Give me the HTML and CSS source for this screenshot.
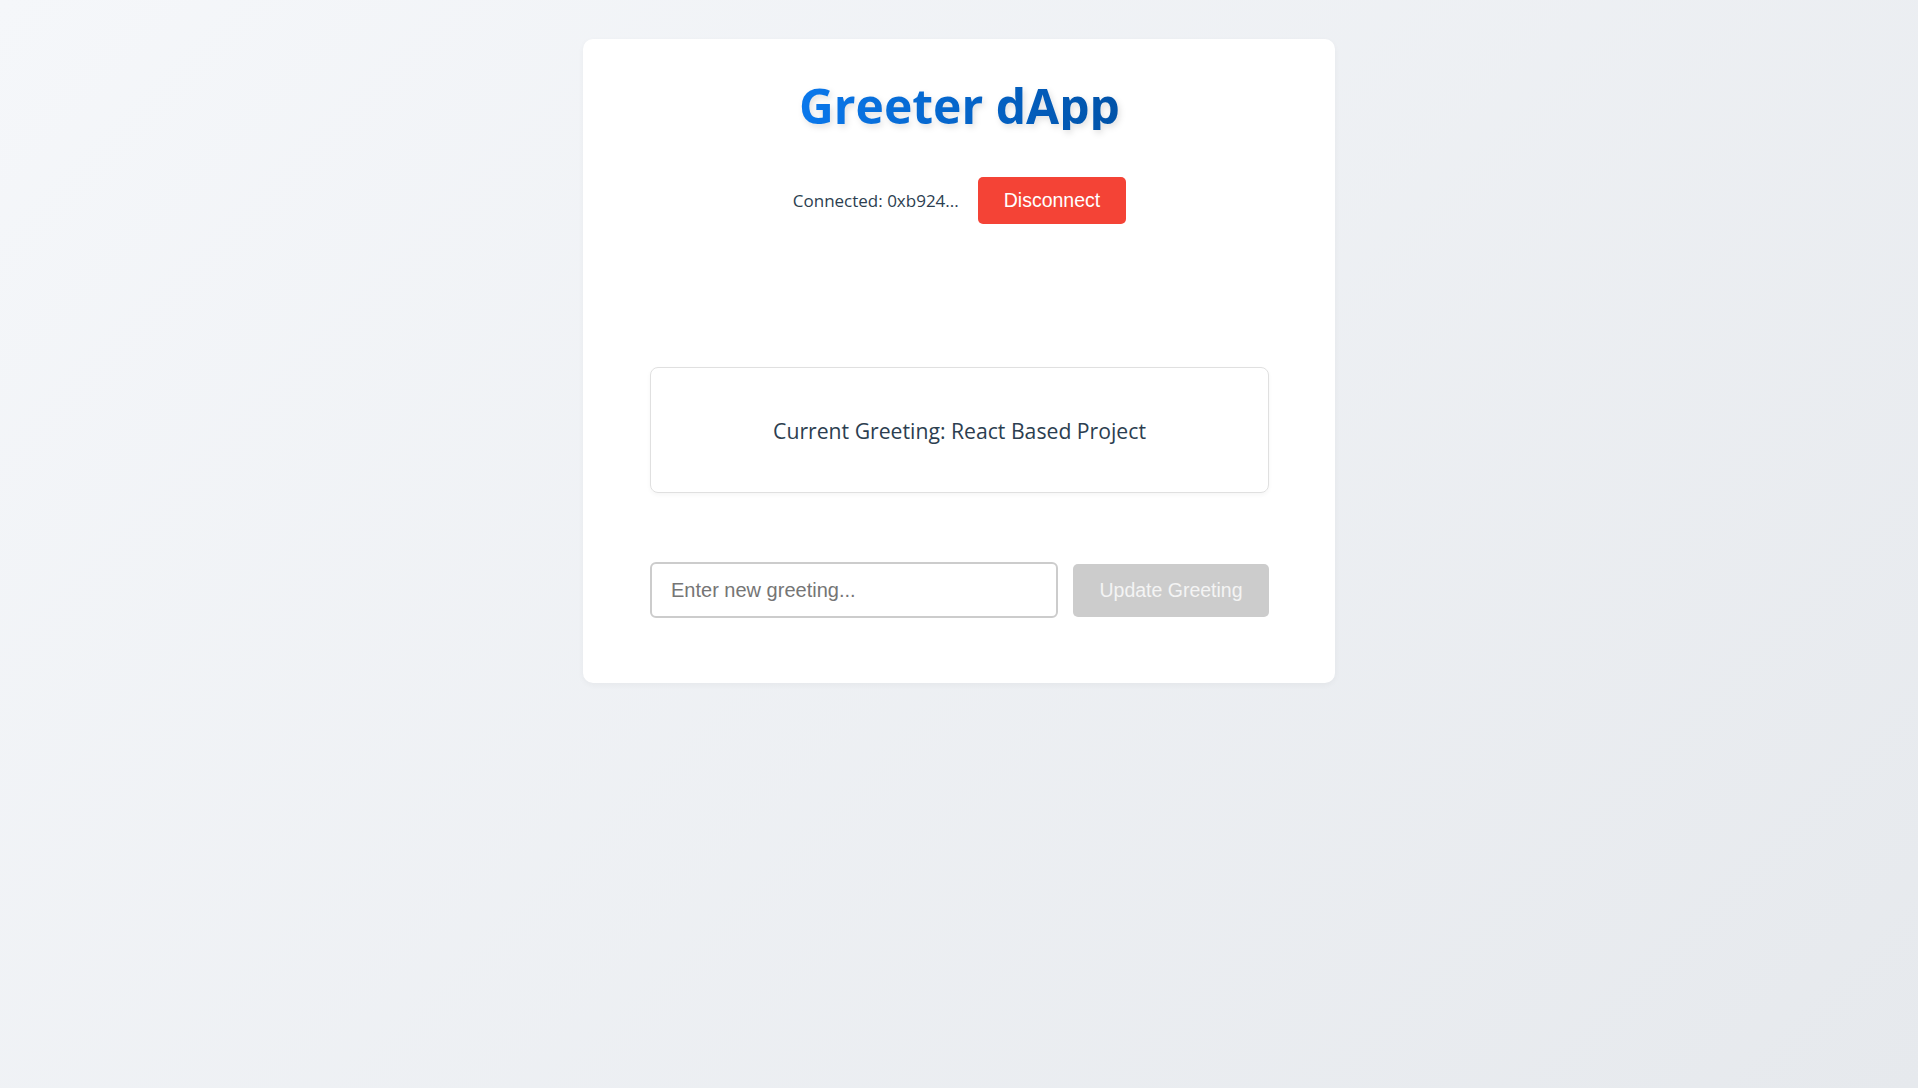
FILE: index.html
```html
<!DOCTYPE html>
<html lang="en">
<head>
<meta charset="utf-8">
<title>Greeter dApp</title>
<link rel="stylesheet" href="styles.css">
</head>
<body>
<div class="app">
  <main class="card">
    <h1 class="title">Greeter dApp</h1>
    <div class="wallet">
      <span class="address">Connected: 0xb924...</span>
      <button class="btn btn-disconnect">Disconnect</button>
    </div>
    <section class="greeting-box">
      <p class="greeting-text">Current Greeting: React Based Project</p>
    </section>
    <form class="update-row">
      <input class="greeting-input" type="text" placeholder="Enter new greeting...">
      <button class="btn btn-update" type="button" disabled>Update Greeting</button>
    </form>
  </main>
</div>
</body>
</html>
```

FILE: styles.css
```css
* { box-sizing: border-box; }

html, body {
  margin: 0;
  padding: 0;
}

body {
  min-height: 100vh;
  background: linear-gradient(135deg, #f5f7fa 0%, #e6e9ed 100%);
  font-family: "Open Sans", "Noto Sans", sans-serif;
  color: #2c3e50;
}

.app {
  padding-top: 39px;
}

.card {
  width: 752px;
  margin: 0 auto;
  background: #ffffff;
  border-radius: 10px;
  padding: 43px 66px 65px 67px;
  box-shadow: 0 2px 6px rgba(0, 0, 0, 0.04);
}

.title {
  margin: 0 auto;
  text-align: center;
  font-size: 48px;
  line-height: 48px;
  font-weight: 700;
  background: linear-gradient(90deg, #0a78ec 0%, #0052a8 100%);
  -webkit-background-clip: text;
  background-clip: text;
  -webkit-text-fill-color: transparent;
  color: transparent;
  width: fit-content;
  filter: drop-shadow(2px 3px 3px rgba(0, 0, 0, 0.12));
}

.wallet {
  margin-top: 47px;
  display: flex;
  justify-content: center;
  align-items: center;
  gap: 19px;
}

.address {
  font-size: 17px;
  font-weight: 500;
  color: #2c3e50;
}

.btn {
  font-family: "Liberation Sans", Arial, sans-serif;
  font-size: 19.5px;
  border: none;
  border-radius: 5px;
  color: #ffffff;
  cursor: pointer;
}

.btn-disconnect {
  height: 47px;
  padding: 0 26px;
  background: #f44336;
}

.greeting-box {
  margin-top: 143px;
  height: 126px;
  border: 1px solid #e0e0e0;
  border-radius: 8px;
  box-shadow: 0 2px 4px rgba(0, 0, 0, 0.04);
  display: flex;
  align-items: center;
  justify-content: center;
}

.greeting-text {
  margin: 0;
  font-size: 21.2px;
  font-weight: 500;
  color: #2c3e50;
}

.update-row {
  margin: 69px 0 0;
  display: flex;
  align-items: center;
  gap: 15px;
}

.greeting-input {
  flex: 1;
  height: 56px;
  padding: 0 19px;
  border: 2px solid #cccccc;
  border-radius: 6px;
  font-family: "Liberation Sans", Arial, sans-serif;
  font-size: 20px;
  color: #333333;
  background: #ffffff;
  outline: none;
}

.greeting-input::placeholder {
  color: #757575;
}

.btn-update {
  width: 196px;
  height: 53px;
  padding: 0;
  background: #cccccc;
  color: #f4f4f4;
  cursor: not-allowed;
}
```
